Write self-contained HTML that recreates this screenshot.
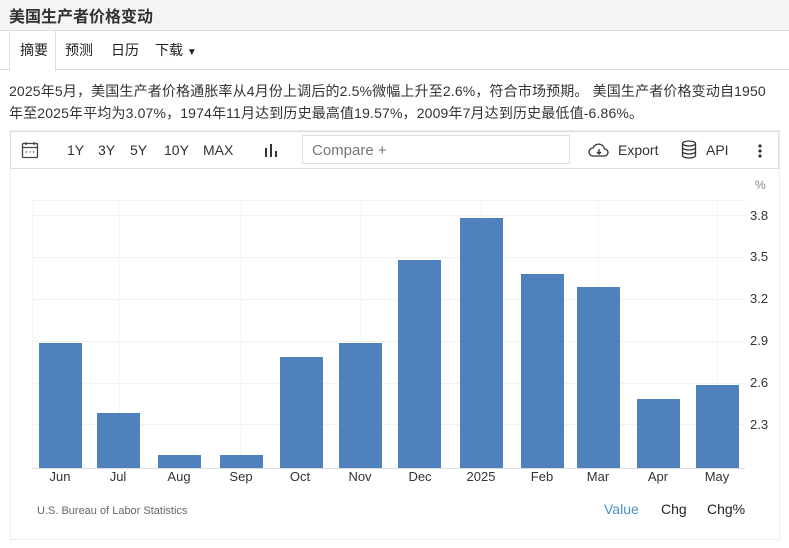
<!DOCTYPE html>
<html><head><meta charset="utf-8"><style>
*{margin:0;padding:0;box-sizing:border-box}
body{width:789px;height:548px;background:#fff;font-family:"Liberation Sans","Noto Sans CJK SC",sans-serif;color:#222;position:relative;overflow:hidden}
.a{position:absolute}
.title{left:0;top:0;width:789px;height:31px;background:#f4f4f4;border-bottom:1px solid #ddd;font-size:16px;font-weight:bold;padding:3px 0 0 9px;color:#333}
.tabs{left:0;top:31px;width:789px;height:39px;border-bottom:1px solid #ddd}
.tab{position:absolute;top:9px;font-size:14px;color:#222}
.act{left:9px;top:31px;width:47px;height:40px;background:#fff;border-left:1px solid #ddd;border-right:1px solid #ddd;}
p{position:absolute;left:9px;top:80px;white-space:nowrap;font-size:14px;line-height:22px;color:#333;letter-spacing:0.15px}
.box{left:10px;top:130px;width:770px;height:410px;border:1px solid #eee}
.tb{left:10px;top:131px;width:769px;height:38px;border:1px solid #ddd}
.tt{position:absolute;top:142px;font-size:14px;color:#333}
.cmp{left:302px;top:135px;width:268px;height:29px;border:1px solid #ddd;font-size:15px;color:#777;padding:6px 0 0 9px}
.h{left:32px;width:713px;height:1px;background:#f2f2f2}
.v{top:200px;width:1px;height:268px;background:#f6f6f6}
.bar{background:#4f81bd;width:43px}
.yl{left:750px;font-size:13px;color:#333}
.xl{top:468px;font-size:13px;color:#333;width:60px;text-align:center}
</style></head><body>
<div class="a title">美国生产者价格变动</div>
<div class="a tabs"></div>
<div class="a act"></div>
<div class="tab" style="left:20px;top:40px">摘要</div>
<div class="tab" style="left:65px;top:40px">预测</div>
<div class="tab" style="left:111px;top:40px">日历</div>
<div class="tab" style="left:155px;top:40px">下载 <span style="font-size:10px">▼</span></div>
<p>2025年5月，美国生产者价格通胀率从4月份上调后的2.5%微幅上升至2.6%，符合市场预期。 美国生产者价格变动自1950<br>年至2025年平均为3.07%，1974年11月达到历史最高值19.57%，2009年7月达到历史最低值-6.86%。</p>
<div class="a box"></div>
<div class="a tb"></div>
<svg class="a" style="left:21px;top:141px" width="18" height="18" viewBox="0 0 18 18" fill="none" stroke="#444" stroke-width="1.3"><rect x="1.5" y="2.5" width="15" height="14" rx="1"/><path d="M1.5 6.5h15M5 1v3M13 1v3"/><path d="M5 11h1M8.5 11h1M12 11h1" stroke-width="1.5"/></svg>
<div class="tt" style="left:67px">1Y</div><div class="tt" style="left:98px">3Y</div><div class="tt" style="left:130px">5Y</div><div class="tt" style="left:164px">10Y</div><div class="tt" style="left:203px">MAX</div>
<svg class="a" style="left:264px;top:143px" width="14" height="14"><path d="M2 5v9M7 1v13M12 8v6" stroke="#333" stroke-width="2"/></svg>
<div class="a cmp">Compare +</div>
<svg class="a" style="left:588px;top:141px" width="22" height="18" viewBox="0 0 22 18" fill="none" stroke="#333" stroke-width="1.3"><path d="M5 15a4 4 0 0 1 0-8a6 6 0 0 1 11.5 1a3.5 3.5 0 0 1 0 7z"/><path d="M11 8v5M9 11l2 2 2-2"/></svg>
<div class="tt" style="left:618px">Export</div>
<svg class="a" style="left:681px;top:140px" width="16" height="19" viewBox="0 0 16 19" fill="none" stroke="#333" stroke-width="1.3"><ellipse cx="8" cy="3.5" rx="6.5" ry="2.5"/><path d="M1.5 3.5v12c0 1.4 2.9 2.5 6.5 2.5s6.5-1.1 6.5-2.5v-12M1.5 7.5c0 1.4 2.9 2.5 6.5 2.5s6.5-1.1 6.5-2.5M1.5 11.5c0 1.4 2.9 2.5 6.5 2.5s6.5-1.1 6.5-2.5"/></svg>
<div class="tt" style="left:706px">API</div>
<svg class="a" style="left:757px;top:143px" width="6" height="16"><circle cx="3" cy="3" r="1.6" fill="#333"/><circle cx="3" cy="8" r="1.6" fill="#333"/><circle cx="3" cy="13" r="1.6" fill="#333"/></svg>
<div class="a" style="left:755px;top:178px;font-size:12px;color:#888">%</div>
<div class="a h" style="top:200px"></div>
<div class="a h" style="top:215px"></div><div class="a h" style="top:257px"></div><div class="a h" style="top:299px"></div><div class="a h" style="top:341px"></div><div class="a h" style="top:383px"></div><div class="a h" style="top:424px"></div>
<div class="a v" style="left:32px"></div><div class="a v" style="left:119px"></div><div class="a v" style="left:240px"></div><div class="a v" style="left:360px"></div><div class="a v" style="left:480px"></div><div class="a v" style="left:598px"></div><div class="a v" style="left:717px"></div>
<div class="a yl" style="top:208px">3.8</div><div class="a yl" style="top:249px">3.5</div><div class="a yl" style="top:291px">3.2</div><div class="a yl" style="top:333px">2.9</div><div class="a yl" style="top:375px">2.6</div><div class="a yl" style="top:417px">2.3</div>
<div class="a bar" style="left:39px;top:343px;height:125px"></div>
<div class="a bar" style="left:97px;top:413px;height:55px"></div>
<div class="a bar" style="left:158px;top:455px;height:13px"></div>
<div class="a bar" style="left:220px;top:455px;height:13px"></div>
<div class="a bar" style="left:280px;top:357px;height:111px"></div>
<div class="a bar" style="left:339px;top:343px;height:125px"></div>
<div class="a bar" style="left:398px;top:260px;height:208px"></div>
<div class="a bar" style="left:460px;top:218px;height:250px"></div>
<div class="a bar" style="left:521px;top:274px;height:194px"></div>
<div class="a bar" style="left:577px;top:287px;height:181px"></div>
<div class="a bar" style="left:637px;top:399px;height:69px"></div>
<div class="a bar" style="left:696px;top:385px;height:83px"></div>
<div class="a" style="left:32px;top:468px;width:713px;height:1px;background:#ddd"></div>
<div class="a xl" style="left:30px;top:469px">Jun</div><div class="a xl" style="left:88px;top:469px">Jul</div><div class="a xl" style="left:149px;top:469px">Aug</div><div class="a xl" style="left:211px;top:469px">Sep</div><div class="a xl" style="left:270px;top:469px">Oct</div><div class="a xl" style="left:330px;top:469px">Nov</div><div class="a xl" style="left:390px;top:469px">Dec</div><div class="a xl" style="left:451px;top:469px">2025</div><div class="a xl" style="left:512px;top:469px">Feb</div><div class="a xl" style="left:568px;top:469px">Mar</div><div class="a xl" style="left:628px;top:469px">Apr</div><div class="a xl" style="left:687px;top:469px">May</div>
<div class="a" style="left:37px;top:505px;font-size:11px;color:#666">U.S. Bureau of Labor Statistics</div>
<div class="a" style="left:604px;top:501px;font-size:14px;color:#4a90c8">Value</div>
<div class="a" style="left:661px;top:501px;font-size:14px;color:#222">Chg</div>
<div class="a" style="left:707px;top:501px;font-size:14px;color:#222">Chg%</div>
</body></html>
